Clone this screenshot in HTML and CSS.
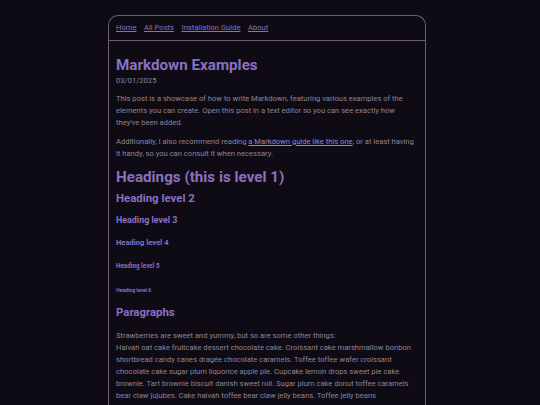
FILE: index.html
```html
<!DOCTYPE html>
<html>
<head>
<meta charset="utf-8">
<link rel="stylesheet" href="styles.css">
</head>
<body>
<div class="page">
  <nav class="nav">
    <a href="#">Home</a>
    <a href="#">All Posts</a>
    <a href="#">Installation Guide</a>
    <a href="#">About</a>
  </nav>
  <main class="content">
    <div class="post-head">
      <div class="title">Markdown Examples</div>
      <div class="date">03/01/2025</div>
    </div>
    <p class="intro">This post is a showcase of how to write Markdown, featuring various examples of the elements you can create. Open this post in a text editor so you can see exactly how they've been added.</p>
    <p>Additionally, I also recommend reading <a href="#">a Markdown guide like this one</a>, or at least having it handy, so you can consult it when necessary.</p>
    <h1>Headings (this is level 1)</h1>
    <h2>Heading level 2</h2>
    <h3>Heading level 3</h3>
    <h4>Heading level 4</h4>
    <h5>Heading level 5</h5>
    <h6>Heading level 6</h6>
    <h2>Paragraphs</h2>
    <p>Strawberries are sweet and yummy, but so are some other things:<br>Halvah oat cake fruitcake dessert chocolate cake. Croissant cake marshmallow bonbon shortbread candy canes dragée chocolate caramels. Toffee toffee wafer croissant chocolate cake sugar plum liquorice apple pie. Cupcake lemon drops sweet pie cake brownie. Tart brownie biscuit danish sweet roll. Sugar plum cake donut toffee caramels bear claw jujubes. Cake halvah toffee bear claw jelly beans. Toffee jelly beans gingerbread pudding sesame snaps gummy bears chocolate cake donut. Jelly beans tiramisu.</p>
  </main>
</div>
</body>
</html>
```
FILE: styles.css
```css
html, body {
  margin: 0;
  padding: 0;
  background: #0f0b14;
}
body {
  font-family: Roboto, "Liberation Sans", sans-serif;
  font-size: 7.6px;
  line-height: 12px;
  color: #8d8397;
  padding-top: 15px;
}
.page {
  width: 316px;
  margin-left: 108px;
  border: 1px solid #6a5f76;
  border-bottom: none;
  border-radius: 10px 10px 0 0;
  min-height: 420px;
}
.nav {
  display: flex;
  gap: 7.6px;
  padding: 6px 7px;
  height: 12px;
  border-bottom: 1px solid #6a5f76;
}
.nav a {
  color: #8a6fc2;
  text-decoration: underline;
}
.content a {
  color: #9a84cc;
  text-decoration: underline;
}
.content {
  padding: 15px 9px 0 7px;
}
.title {
  font-size: 15.2px;
  font-weight: 700;
  line-height: 18px;
  color: #8a6fc2;
}
.date {
  line-height: 12px;
  padding-top: 1px;
}
p {
  margin: 7px 0 0;
}
p.intro {
  margin-top: 6px;
}
h1, h2, h3, h4, h5, h6 {
  color: #8a6fc2;
  font-weight: 700;
  line-height: 1.2;
  margin-bottom: 0;
}
h1 { font-size: 15.2px; margin-top: 8px; }
h2 { font-size: 11.4px; margin-top: 6px; }
h3 { font-size: 8.9px; margin-top: 8.7px; }
h4 { font-size: 7.6px; margin-top: 13px; }
h5 { font-size: 6.3px; margin-top: 15.6px; }
h6 { font-size: 5.1px; margin-top: 16px; }
h6 + h2 { margin-top: 13px; }
h2 + p { margin-top: 11px; }
```
